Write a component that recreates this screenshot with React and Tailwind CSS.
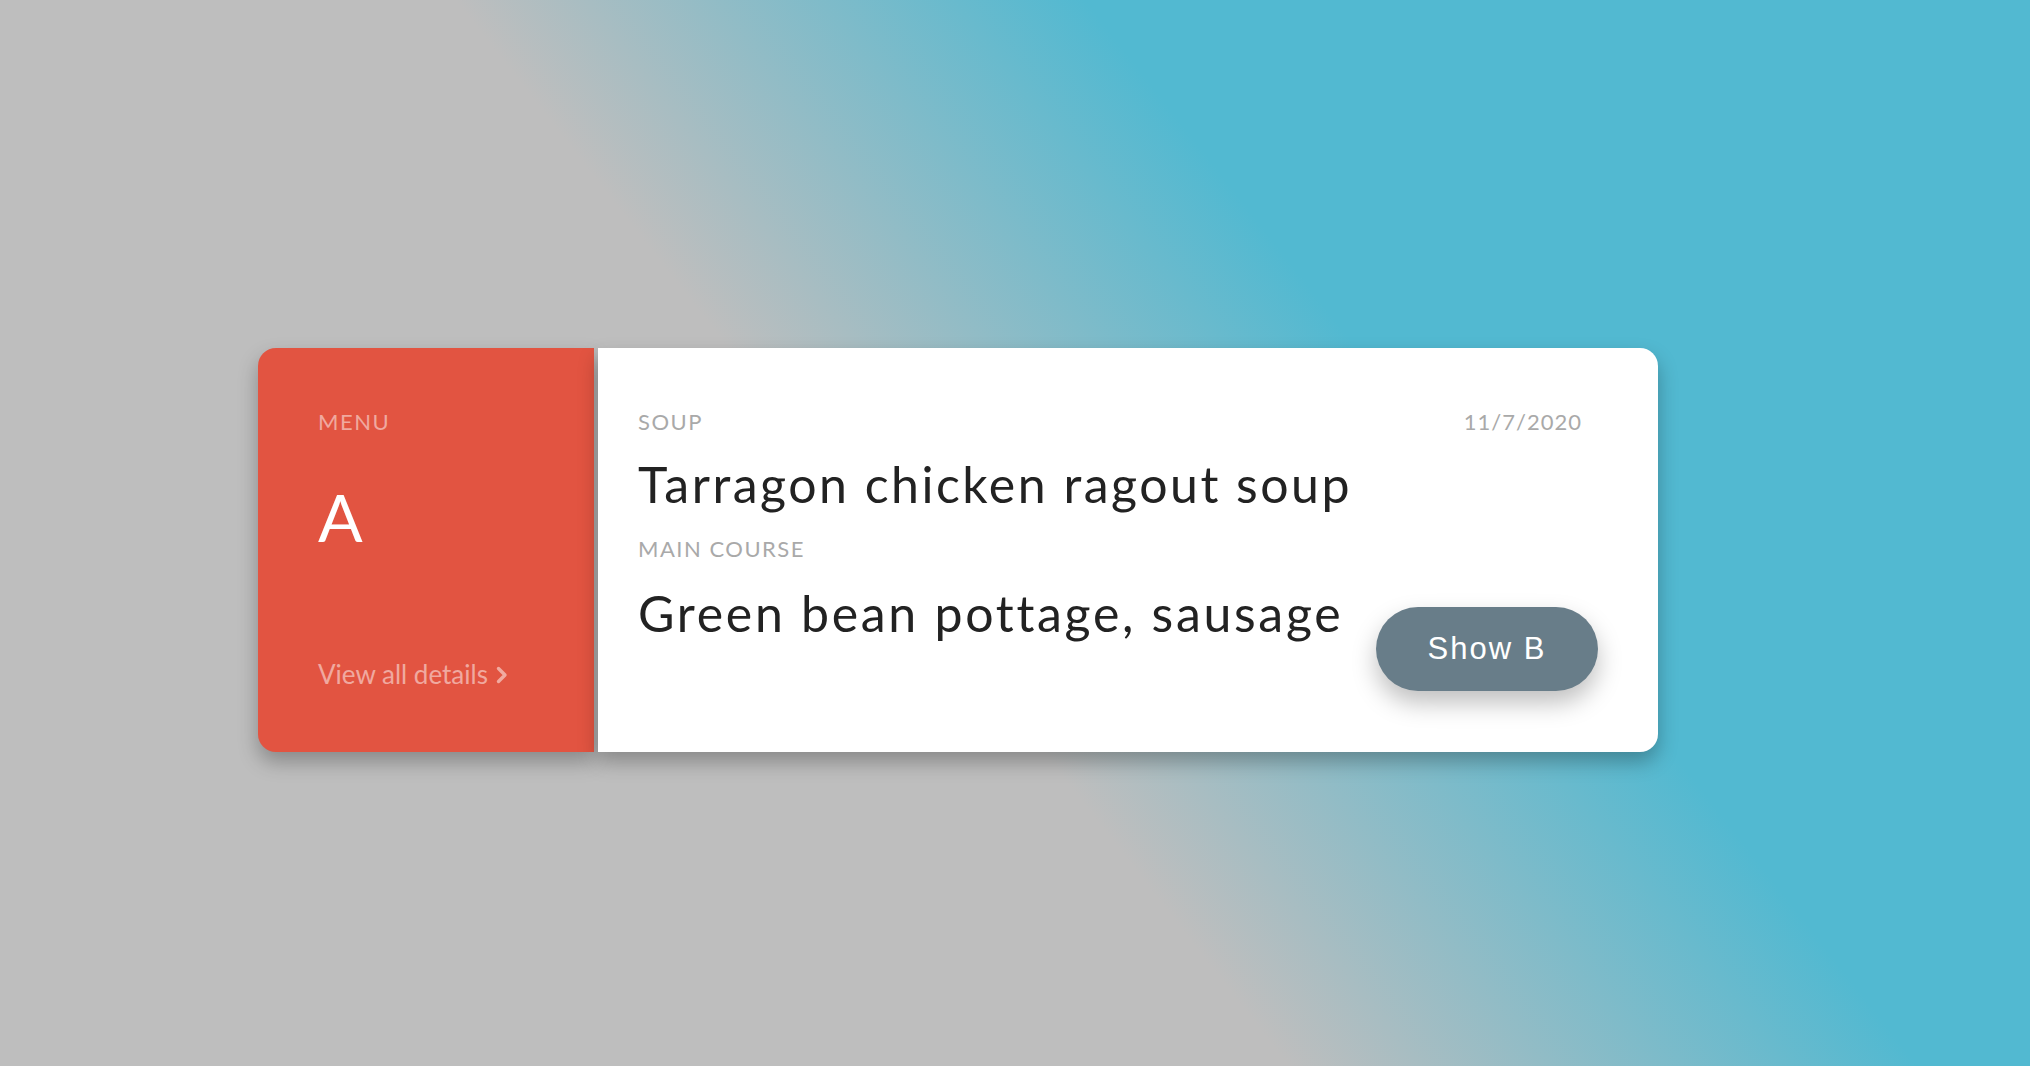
import { useState } from "react";

const MENUS = {
  A: { soup: "Tarragon chicken ragout soup", main: "Green bean pottage, sausage" },
  B: { soup: "Tarragon chicken ragout soup", main: "Green bean pottage, sausage" },
};

function Chevron() {
  return (
    <svg width="14" height="18" viewBox="0 0 14 18" className="ml-[7px] mt-[1px]">
      <path d="M3.5 2.5 L10 9 L3.5 15.5" fill="none" stroke="currentColor" strokeWidth="3.4" strokeLinecap="round" strokeLinejoin="round" />
    </svg>
  );
}

export default function App() {
  const [menu, setMenu] = useState("A");
  const other = menu === "A" ? "B" : "A";
  const data = MENUS[menu];

  return (
    <div
      className="min-h-[1066px] w-full bg-[linear-gradient(52deg,#bebebe_45%,#52b9d1_67%)] pl-[258px] pt-[348px] font-['Lato','Noto_Sans',sans-serif]"
    >
      <div className="flex h-[404px] w-[1400px] gap-[4px]">
        {/* Left panel */}
        <div className="flex w-[336px] shrink-0 flex-col rounded-l-[18px] bg-[#e25441] pb-[62px] pl-[60px] pt-[61px] shadow-[0_10px_20px_rgba(0,0,0,0.28)]">
          <div className="text-[22px] leading-[1.2] tracking-[1.5px] text-white/50">MENU</div>
          <div className="mt-[42px] text-[66px] leading-[1.2] text-white">{menu}</div>
          <a href="#" className="mt-auto flex items-center text-[26px] leading-[1.2] text-white/50">
            View all details
            <Chevron />
          </a>
        </div>

        {/* Right panel */}
        <div className="flex flex-1 flex-col rounded-r-[18px] bg-white pl-[40px] pr-[60px] pt-[61px] shadow-[0_10px_20px_rgba(0,0,0,0.28)]">
          <div className="flex items-start justify-between">
            <div className="text-[22px] leading-[1.2] tracking-[1.5px] text-[#a9a9a9]">SOUP</div>
            <div className="mr-[16px] text-[22px] leading-[1.2] tracking-[1px] text-[#a9a9a9]">11/7/2020</div>
          </div>
          <div className="mt-[19px] text-[50px] leading-[1.2] tracking-[2.5px] text-[#222222]">{data.soup}</div>
          <div className="mt-[22px] text-[22px] leading-[1.2] tracking-[1.5px] text-[#a9a9a9]">MAIN COURSE</div>
          <div className="mt-[20px] flex items-start justify-between">
            <div className="text-[50px] leading-[1.2] tracking-[2.7px] text-[#222222]">{data.main}</div>
            <button
              onClick={() => setMenu(other)}
              className="mt-[24px] h-[84px] w-[222px] shrink-0 rounded-full bg-[#687d89] font-['Liberation_Sans',Arial,sans-serif] text-[31px] tracking-[2px] text-white shadow-[0_12px_24px_rgba(0,0,0,0.25)]"
            >
              Show {other}
            </button>
          </div>
        </div>
      </div>
    </div>
  );
}
